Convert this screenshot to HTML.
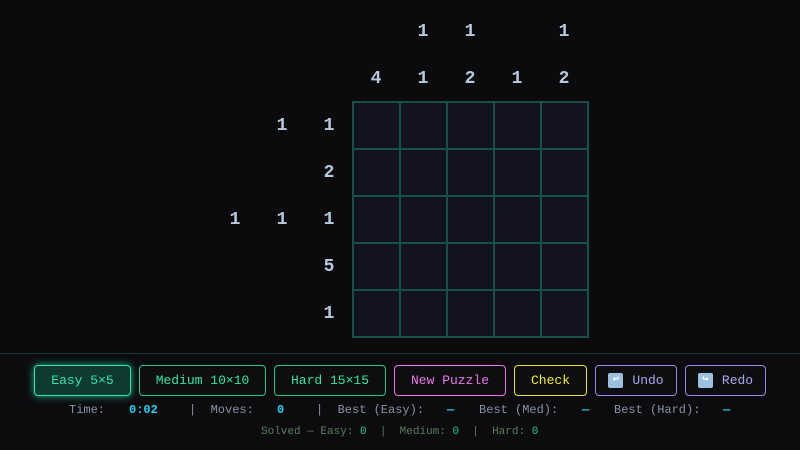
<!DOCTYPE html>
<html><head><meta charset="utf-8"><style>
*{margin:0;padding:0;box-sizing:border-box}
body{width:800px;height:450px;background:#0b0b0e;font-family:"Liberation Mono",monospace;position:relative;overflow:hidden}
.c{position:absolute;color:#b9c9dd;font-weight:bold;font-size:18px;width:30px;text-align:center;line-height:20px}
.grid{position:absolute;left:352px;top:101px;width:237px;height:237px;background:#13121f;border:2px solid #16504a}
.vl{position:absolute;top:0;bottom:0;width:2px;background:#16504a}
.hl{position:absolute;left:0;right:0;height:2px;background:#16504a}
.panel{position:absolute;left:0;top:353px;width:800px;height:97px;background:#0c0c0f;border-top:1px solid #173a38}
.b{position:absolute;top:365px;height:31px;border:1px solid;border-radius:4px;font-size:13px;display:flex;align-items:center;justify-content:center;background:#0e0e11}
.ic{display:inline-block;width:15px;height:15px;background:#9cc0e0;color:#fff;font-size:11px;line-height:15px;text-align:center;border-radius:2px;margin-right:9px;font-weight:bold}
.s{position:absolute;top:403px;font-size:12px;color:#8792a6}
.v{color:#22d3ee;font-weight:bold}
.t{position:absolute;top:426px;font-size:11px;color:#5d7a5f}
.g{color:#22c98f}
</style></head><body>
<div class="c" style="left:408px;top:22px">1</div>
<div class="c" style="left:455px;top:22px">1</div>
<div class="c" style="left:549px;top:22px">1</div>
<div class="c" style="left:361px;top:69px">4</div>
<div class="c" style="left:408px;top:69px">1</div>
<div class="c" style="left:455px;top:69px">2</div>
<div class="c" style="left:502px;top:69px">1</div>
<div class="c" style="left:549px;top:69px">2</div>
<div class="c" style="left:267px;top:116px">1</div>
<div class="c" style="left:314px;top:116px">1</div>
<div class="c" style="left:314px;top:163px">2</div>
<div class="c" style="left:220px;top:210px">1</div>
<div class="c" style="left:267px;top:210px">1</div>
<div class="c" style="left:314px;top:210px">1</div>
<div class="c" style="left:314px;top:257px">5</div>
<div class="c" style="left:314px;top:304px">1</div>
<div class="grid">
<div class="vl" style="left:45px"></div><div class="vl" style="left:92px"></div><div class="vl" style="left:139px"></div><div class="vl" style="left:186px"></div>
<div class="hl" style="top:45px"></div><div class="hl" style="top:92px"></div><div class="hl" style="top:139px"></div><div class="hl" style="top:186px"></div>
</div>
<div class="panel"></div>
<div class="b" style="left:34px;width:97px;color:#2ee6a6;border-color:#2ee6a6;background:#0f3a30;box-shadow:0 0 8px #1fb88a">Easy 5×5</div>
<div class="b" style="left:139px;width:127px;color:#2ee6a6;border-color:#22c98f">Medium 10×10</div>
<div class="b" style="left:274px;width:112px;color:#2ee6a6;border-color:#22c98f">Hard 15×15</div>
<div class="b" style="left:394px;width:112px;color:#e879e8;border-color:#e879e8">New Puzzle</div>
<div class="b" style="left:514px;width:73px;color:#f0f020;border-color:#e8e820">Check</div>
<div class="b" style="left:595px;width:82px;color:#a5a8f0;border-color:#8c8ee0"><span class="ic">↩</span>Undo</div>
<div class="b" style="left:685px;width:81px;color:#a5a8f0;border-color:#8c8ee0"><span class="ic">↪</span>Redo</div>
<div class="s" style="left:69px">Time:</div><div class="s v" style="left:129px">0:02</div>
<div class="s" style="left:189px">|&nbsp; Moves:</div><div class="s v" style="left:277px">0</div>
<div class="s" style="left:316px">|&nbsp; Best (Easy):</div><div class="s v" style="left:447px">—</div>
<div class="s" style="left:479px">Best (Med):</div><div class="s v" style="left:582px">—</div>
<div class="s" style="left:614px">Best (Hard):</div><div class="s v" style="left:723px">—</div>
<div class="t" style="left:261px">Solved — Easy: <span class="g">0</span> &nbsp;| &nbsp;Medium: <span class="g">0</span> &nbsp;| &nbsp;Hard: <span class="g">0</span></div>
</body></html>
